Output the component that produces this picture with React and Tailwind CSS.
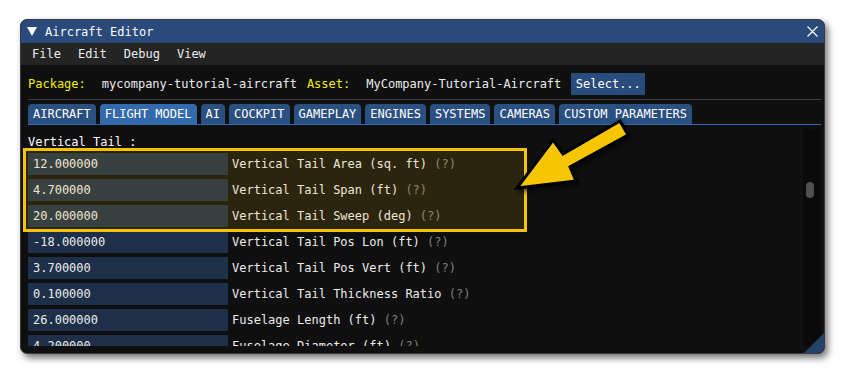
import React from 'react';

const rows = [
  ['12.000000', 'Vertical Tail Area (sq. ft)'],
  ['4.700000', 'Vertical Tail Span (ft)'],
  ['20.000000', 'Vertical Tail Sweep (deg)'],
  ['-18.000000', 'Vertical Tail Pos Lon (ft)'],
  ['3.700000', 'Vertical Tail Pos Vert (ft)'],
  ['0.100000', 'Vertical Tail Thickness Ratio'],
  ['26.000000', 'Fuselage Length (ft)'],
  ['4.200000', 'Fuselage Diameter (ft)'],
];

const tabs = ['AIRCRAFT', 'FLIGHT MODEL', 'AI', 'COCKPIT', 'GAMEPLAY', 'ENGINES', 'SYSTEMS', 'CAMERAS', 'CUSTOM PARAMETERS'];

const Tab = ({ label, active }) =>
<div
  className={`h-[20px] px-[5px] flex items-center rounded-t-[4px] ${active ? 'bg-[#3369ad]' : 'bg-[#2a4f81]'}`}>
    {label}
  </div>;


const Row = ({ value, label }) =>
<div className="flex h-[22px] shrink-0 items-center gap-[4px]">
    <div className="w-[200px] h-full bg-[#1d2f49] pl-[5px] flex items-center">{value}</div>
    <div className="whitespace-nowrap">
      {label}
      <span className="text-[#7f7f7f]"> (?)</span>
    </div>
  </div>;


export default function App() {
  return (
    <div className="relative w-[845px] h-[376px] bg-white pt-[19px] pl-[20px] overflow-hidden font-['DejaVu_Sans_Mono',monospace] text-[12px] text-[#ececec]">
      <div className="relative w-[805px] h-[335px] rounded-[7px] bg-[#0f0f0f] overflow-hidden flex flex-col shadow-[3px_4px_7px_rgba(0,0,0,0.55)] border border-[#3a3a40]">
        {/* title bar */}
        <div className="h-[23px] shrink-0 bg-[#294a7a] flex items-center pl-[6px] pr-[6px] text-white">
          <svg width="10" height="9" viewBox="0 0 10 9" className="mr-[8px]">
            <polygon points="0,0 10,0 5,9" fill="#fff" />
          </svg>
          <span>Aircraft Editor</span>
          <svg width="11" height="11" viewBox="0 0 11 11" className="ml-auto">
            <path d="M0.5 0.5 L10.5 10.5 M10.5 0.5 L0.5 10.5" stroke="#fff" strokeWidth="1.2" />
          </svg>
        </div>
        {/* menu bar */}
        <div className="h-[22px] shrink-0 bg-[#242424] flex items-center pl-[11px] gap-[17px]">
          <span>File</span>
          <span>Edit</span>
          <span>Debug</span>
          <span>View</span>
        </div>
        {/* body */}
        <div className="flex-1 min-h-0 flex flex-col pl-[7px] pr-[3px] pt-[8px] pb-[7px]">
          <div className="h-[22px] shrink-0 flex items-center whitespace-nowrap">
            <span className="text-[#f2ee00]">Package:</span>
            <span className="ml-[16px]">mycompany-tutorial-aircraft</span>
            <span className="ml-[10px] text-[#f2ee00]">Asset:</span>
            <span className="ml-[16px]">MyCompany-Tutorial-Aircraft</span>
            <div className="ml-[10px] h-[22px] w-[74px] bg-[#2a4c7c] flex items-center justify-center text-white">Select...</div>
          </div>
          <div className="mt-[4px] h-px shrink-0 bg-[#3b3c42]" />
          <div className="mt-[4px] flex gap-[4px] shrink-0 text-white">
            {tabs.map((t) => <Tab key={t} label={t} active={t === 'FLIGHT MODEL'} />)}
          </div>
          <div className="h-px shrink-0 bg-[#3369ad]" />
          {/* child region */}
          <div className="relative mt-[4px] flex-1 min-h-0 flex">
            <div className="flex-1 min-w-0 overflow-hidden flex flex-col pt-[5px]">
              <div className="h-[16px] leading-[16px] shrink-0 text-white">Vertical Tail :</div>
              <div className="mt-[3px] flex flex-col gap-[4px]">
                {rows.map(([v, l]) => <Row key={l} value={v} label={l} />)}
              </div>
            </div>
            <div className="w-[18px] shrink-0 bg-[#0a0a0a] pl-[3px] pt-[53px]">
              <div className="w-[8px] h-[16px] rounded-[4px] bg-[#4f4f4f]" />
            </div>
            {/* highlight annotation */}
            <div className="absolute left-[-5px] top-[19px] w-[504px] h-[84px] border-[3px] border-[#f5c400] bg-[rgba(255,196,0,0.12)]" />
          </div>
        </div>
        {/* resize grip */}
        <svg width="20" height="20" viewBox="0 0 20 20" className="absolute right-0 bottom-0">
          <polygon points="0,20 20,0 20,20" fill="#26426a" />
        </svg>
      </div>
      {/* arrow annotation */}
      <svg width="845" height="376" viewBox="0 0 845 376" className="absolute left-0 top-0 pointer-events-none">
        <defs>
          <filter id="sh" x="-20%" y="-20%" width="140%" height="140%">
            <feDropShadow dx="2" dy="3" stdDeviation="2" floodColor="#000" floodOpacity="0.6" />
          </filter>
        </defs>
        <polygon
          points="517,188 553,140 563,154 620,121 628,135 570,167 576,181"
          fill="#f7c600"
          stroke="#000"
          strokeWidth="3"
          strokeLinejoin="miter"
          filter="url(#sh)" />
      </svg>
    </div>);

}
